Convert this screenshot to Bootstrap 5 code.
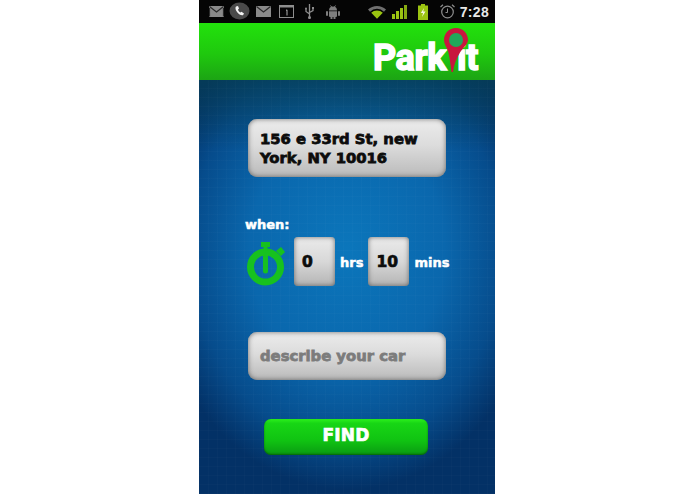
<!DOCTYPE html>
<html lang="en">
  <head>
    <meta charset="UTF-8" />
    <meta name="viewport" content="width=device-width, initial-scale=1.0" />
    <title>Park it</title>
    <link
      href="https://cdn.jsdelivr.net/npm/bootstrap@5.3.0/dist/css/bootstrap.min.css"
      rel="stylesheet"
    />
    <style>
      body {
        background-color: #fff;
        font-family: "DejaVu Sans", sans-serif;
      }
      .phone {
        width: 296px;
        height: 494px;
        margin-right: 1px;
        overflow: hidden;
      }
      .status-bar {
        height: 23px;
        background-color: #050505;
        padding: 0 6px 0 10px;
      }
      .status-bar svg {
        display: block;
        flex: none;
      }
      .gap-5 { margin-left: 5px; }
      .gap-6 { margin-left: 6px; }
      .gap-8 { margin-left: 8px; }
      .gap-9 { margin-left: 9px; }
      .gap-11 { margin-left: 11px; }
      .gap-12 { margin-left: 12px; }
      .gap-28 { margin-left: 28px; }
      .status-time {
        font-family: "Liberation Sans", sans-serif;
        font-weight: 700;
        font-size: 14px;
        color: #e8e8e8;
        line-height: 1;
        letter-spacing: 0.3px;
      }
      .app-header {
        height: 57px;
        background: linear-gradient(#22e20c 0%, #1fc80e 55%, #1ca414 100%);
        padding: 0 17px 0 0;
      }
      .logo {
        position: relative;
        color: #fff;
        font-family: Roboto, sans-serif;
        font-weight: 700;
        font-size: 36px;
        letter-spacing: -0.4px;
        line-height: 1;
        padding-bottom: 4px;
        -webkit-text-stroke: 1.5px #fff;
      }
      .logo-gap {
        display: inline-block;
        width: 11px;
      }
      .logo-pin {
        position: absolute;
        right: 9px;
        top: -13px;
      }
      .app-main {
        height: 414px;
        padding: 39px 49px 0;
        background:
          repeating-linear-gradient(90deg, rgba(255, 255, 255, 0.014) 0 1px, transparent 1px 9px),
          repeating-linear-gradient(0deg, rgba(255, 255, 255, 0.014) 0 1px, transparent 1px 9px),
          linear-gradient(rgba(6, 62, 84, 0.75) 0, rgba(6, 62, 84, 0) 70px),
          radial-gradient(ellipse 195px 240px at 50% 41%, #0b76bb 0%, #0a67ad 50%, #064c8c 80%, #033166 100%),
          #033166;
      }
      .field {
        width: 198px;
        border-radius: 9px;
        background: linear-gradient(#ececec 0%, #dcdcdc 45%, #bababa 100%);
        box-shadow: inset 0 0 5px rgba(70, 70, 70, 0.75);
        font-weight: 700;
        font-size: 14.8px;
        white-space: nowrap;
        -webkit-text-stroke: 0.8px currentColor;
      }
      .field-address {
        height: 58px;
        padding: 10px 12px;
        color: #0c0c0c;
        line-height: 19px;
      }
      .field-car {
        height: 48px;
        margin-top: 46px;
        padding: 0 12px;
        color: #7c7c7c;
      }
      .when-label {
        margin: 39px 0 4px -3px;
        height: 17px;
        color: #fff;
        font-weight: 700;
        font-size: 13px;
        line-height: 17px;
        -webkit-text-stroke: 0.5px #fff;
      }
      .time-row {
        height: 49px;
        margin-left: -2px;
      }
      .time-row > * {
        flex: none;
      }
      .time-box {
        width: 41px;
        height: 49px;
        padding: 2px 0 0 8px;
        border-radius: 4px;
        background: linear-gradient(#ebebeb 0%, #d8d8d8 50%, #b4b4b4 100%);
        box-shadow: inset 0 0 5px rgba(70, 70, 70, 0.75);
        color: #0c0c0c;
        font-weight: 700;
        font-size: 15.5px;
        -webkit-text-stroke: 0.7px #0c0c0c;
      }
      .time-unit {
        padding-top: 2px;
        color: #fff;
        font-weight: 700;
        font-size: 13px;
        -webkit-text-stroke: 0.5px #fff;
      }
      .find-btn {
        display: block;
        width: 164px;
        height: 36px;
        margin: 39px 0 0 16px;
        padding: 0 0 2px;
        border: 0;
        border-radius: 7px;
        background: linear-gradient(#2cf01c 0%, #17d615 12%, #10c312 60%, #0a9a12 100%);
        box-shadow: inset 0 -1px 2px rgba(0, 60, 0, 0.6);
        color: #fff;
        font-weight: 700;
        font-size: 17px;
        letter-spacing: 0.2px;
        -webkit-text-stroke: 0.7px #fff;
      }
    </style>
  </head>
  <body>
    <div class="d-flex justify-content-center">
      <div class="phone">
        <div class="status-bar d-flex align-items-center">
          <svg width="15" height="11" viewBox="0 0 15 11">
            <rect width="15" height="11" fill="#8a8a8a" />
            <path d="M0.5 0.5 7.5 6 14.5 0.5M0.5 10.5V2M14.5 10.5V2" fill="none" stroke="#2a2a2a" stroke-width="1.2" />
          </svg>
          <svg class="gap-5" width="21" height="21" viewBox="0 0 21 21">
            <ellipse cx="10.5" cy="10" rx="10" ry="8.5" fill="#4a4a4a" />
            <path d="M7 5.5c-1 1-.6 3.5 1.2 5.8 1.800 2.200 4 3.500 5.800 2.900l1-1.700-2.500-1.700-1.200.8c-1-.6-2-2-2.300-3.200l1-.8-1-2.700z" fill="#f4f4f4" />
          </svg>
          <svg class="gap-6" width="15" height="11" viewBox="0 0 15 11">
            <rect width="15" height="11" fill="#8a8a8a" />
            <path d="M0.500 0.500 7.500 6 14.500 0.500" fill="none" stroke="#2a2a2a" stroke-width="1.2" />
          </svg>
          <svg class="gap-8" width="15" height="13" viewBox="0 0 15 13">
            <rect x="0.500" y="0.500" width="14" height="12" fill="none" stroke="#8e8e8e" />
            <rect x="0.500" y="0.500" width="14" height="2" fill="#8e8e8e" />
            <path d="M7 5.500 8 4.800V10.500" fill="none" stroke="#b0b0b0" />
          </svg>
          <svg class="gap-11" width="9" height="15" viewBox="0 0 9 15">
            <path d="M4.500 0V15M4.500 10 1 7.500V5M4.500 8.500 8 6.500V4.500" fill="none" stroke="#8e8e8e" stroke-width="1.300" />
            <circle cx="1" cy="4.500" r="1" fill="#8e8e8e" />
            <rect x="7" y="3" width="2" height="2" fill="#8e8e8e" />
            <circle cx="4.500" cy="13.500" r="1.500" fill="#8e8e8e" />
          </svg>
          <svg class="gap-12" width="14" height="14" viewBox="0 0 14 14">
            <path d="M3 5.500a4 4 0 0 1 8 0zM3 6.200h8V11a1 1 0 0 1-1 1H4a1 1 0 0 1-1-1z" fill="#7e7e7e" />
            <rect x="0" y="6" width="2" height="5" rx="1" fill="#7e7e7e" />
            <rect x="12" y="6" width="2" height="5" rx="1" fill="#7e7e7e" />
            <path d="M4.500 0.500 6 2.500M9.500 0.500 8 2.500" stroke="#7e7e7e" fill="none" />
            <rect x="4.500" y="11" width="2" height="3" fill="#7e7e7e" />
            <rect x="7.500" y="11" width="2" height="3" fill="#7e7e7e" />
          </svg>
          <svg class="gap-28" width="18" height="14" viewBox="0 0 18 14">
            <path d="M0 4.500a13 13 0 0 1 18 0l-2 2.200a10 10 0 0 0-14 0z" fill="#6f6f6f" />
            <path d="M3.200 7.800a8.500 8.500 0 0 1 11.600 0l-5.800 6z" fill="#9bc411" />
          </svg>
          <svg class="gap-6" width="15" height="14" viewBox="0 0 15 14">
            <rect x="0" y="9" width="3" height="5" fill="#9bc411" />
            <rect x="4" y="6" width="3" height="8" fill="#9bc411" />
            <rect x="8" y="3" width="3" height="11" fill="#9bc411" />
            <rect x="12" y="0" width="3" height="14" fill="#86a912" />
          </svg>
          <svg class="gap-11" width="10" height="16" viewBox="0 0 10 16">
            <rect x="3" y="0" width="4" height="2" fill="#9bc411" />
            <rect x="0" y="1.500" width="10" height="14.500" fill="#9bc411" />
            <path d="M6 4 2.800 9H5L4 13 7.500 7.500H5.200z" fill="#f5f5e0" />
          </svg>
          <svg class="gap-12" width="15" height="15" viewBox="0 0 15 15">
            <circle cx="7.500" cy="8" r="5.800" fill="none" stroke="#8e8e8e" stroke-width="1.200" />
            <path d="M7.500 4.500V8.500H5.500" fill="none" stroke="#8e8e8e" />
            <path d="M0.500 3 3 0.800M14.500 3 12 0.800" stroke="#8e8e8e" stroke-width="1.200" fill="none" />
          </svg>
          <span class="status-time ms-auto">7:28</span>
        </div>

        <div class="app-header d-flex justify-content-end align-items-end">
          <div class="logo">
            Park<span class="logo-gap"></span>it
            <svg class="logo-pin" width="26" height="45" viewBox="0 0 26 45">
              <path d="M13 1C6 1 1 6.500 1 13c0 4 2.500 7 4 11 1.500 5 2.500 13 3.500 21h1.500c.8-7 3.500-14 7-19.500 2.500-4 8-8.500 8-12.500C25 6.500 20 1 13 1z" fill="#c8163e" />
              <circle cx="13" cy="13" r="7" fill="#1fa85a" />
            </svg>
          </div>
        </div>

        <div class="app-main">
          <div class="field field-address">156 e 33rd St, new<br />York, NY 10016</div>
          <div class="when-label">when:</div>
          <div class="time-row d-flex align-items-center">
            <svg width="39" height="49" viewBox="0 0 39 49">
              <circle cx="19.500" cy="30" r="15" fill="none" stroke="#17c11f" stroke-width="7" />
              <rect x="15" y="5" width="9" height="5" fill="#17c11f" />
              <rect x="17.500" y="9" width="4" height="5" fill="#17c11f" />
              <path d="M30 14 35 10 39 15 35 19z" fill="#17c11f" />
              <path d="M17 18h5v16a2.500 2.500 0 0 1-5 0z" fill="#17c11f" />
            </svg>
            <div class="time-box d-flex align-items-center gap-9">0</div>
            <span class="time-unit gap-5">hrs</span>
            <div class="time-box d-flex align-items-center gap-5">10</div>
            <span class="time-unit gap-5">mins</span>
          </div>
          <div class="field field-car d-flex align-items-center">describe your car</div>
          <button type="button" class="btn find-btn">FIND</button>
        </div>
      </div>
    </div>

    <script src="https://cdn.jsdelivr.net/npm/bootstrap@5.3.0/dist/js/bootstrap.bundle.min.js"></script>
  </body>
</html>
